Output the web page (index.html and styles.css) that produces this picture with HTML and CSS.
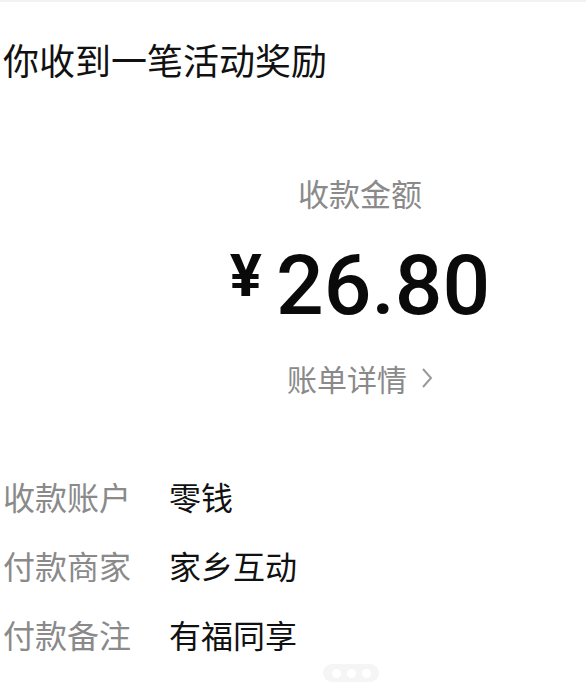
FILE: index.html
```html
<!DOCTYPE html>
<html lang="zh-CN">

<head>
    <meta charset="UTF-8">
    <meta name="viewport" content="width=device-width, initial-scale=1.0">
    <title>收款详情</title>
    <link rel="stylesheet" href="styles.css">
</head>

<body>
    <div class="page">
        <h1 class="title">你收到一笔活动奖励</h1>

        <div class="summary">
            <div class="summary-label">收款金额</div>
            <div class="amount"><span class="currency">¥</span><span class="value">26.80</span></div>
            <a class="detail" href="#">账单详情
                <svg class="chevron" width="12" height="22" viewBox="0 0 12 22">
                    <path d="M2 2 L10 11 L2 20" fill="none" stroke="#9a9a9a" stroke-width="2" />
                </svg>
            </a>
        </div>

        <div class="info">
            <div class="info-row">
                <span class="info-label">收款账户</span>
                <span class="info-value">零钱</span>
            </div>
            <div class="info-row">
                <span class="info-label">付款商家</span>
                <span class="info-value">家乡互动</span>
            </div>
            <div class="info-row">
                <span class="info-label">付款备注</span>
                <span class="info-value">有福同享</span>
            </div>
        </div>

        <div class="dots">
            <span></span>
            <span></span>
            <span></span>
        </div>
    </div>
</body>

</html>
```

FILE: styles.css
```css
* {
    margin: 0;
    padding: 0;
    box-sizing: border-box;
}

body {
    background-color: #fff;
    font-family: "Noto Sans CJK SC", "Liberation Sans", sans-serif;
    color: #111;
    overflow: hidden;
}

.page {
    width: 586px;
    height: 686px;
    border-top: 2px solid #f2f2f2;
    padding-left: 3px;
}

.title {
    margin-top: 35px;
    font-size: 36px;
    font-weight: normal;
    line-height: 44px;
}

.summary {
    display: flex;
    flex-direction: column;
    align-items: center;
    padding-left: 131px;
}

.summary-label {
    margin-top: 92px;
    font-size: 31px;
    line-height: 40px;
    color: #8a8a8a;
}

.amount {
    margin-top: 28px;
    height: 90px;
    line-height: 90px;
    font-family: Roboto, "Liberation Sans", sans-serif;
    font-weight: 500;
    color: #0a0a0a;
    white-space: nowrap;
}

.currency {
    font-size: 60px;
    line-height: 40px;
    vertical-align: 18px;
    margin-right: 14px;
    font-weight: bold;
}

.value {
    font-size: 84px;
}

.detail {
    margin-top: 27px;
    display: flex;
    align-items: center;
    gap: 14px;
    font-size: 30px;
    line-height: 40px;
    color: #8a8a8a;
    text-decoration: none;
}

.info {
    margin-top: 78px;
    display: flex;
    flex-direction: column;
    gap: 29px;
}

.info-row {
    display: grid;
    grid-template-columns: 166px auto;
    font-size: 32px;
    line-height: 40px;
}

.info-label {
    color: #8a8a8a;
}

.info-value {
    color: #111;
}

.dots {
    margin: 10px 0 0 320px;
    width: 56px;
    height: 18px;
    border-radius: 9px;
    background-color: #f5f5f5;
    display: flex;
    justify-content: center;
    align-items: center;
    gap: 6px;
}

.dots span {
    width: 9px;
    height: 9px;
    border-radius: 50%;
    background-color: #fff;
}
```
